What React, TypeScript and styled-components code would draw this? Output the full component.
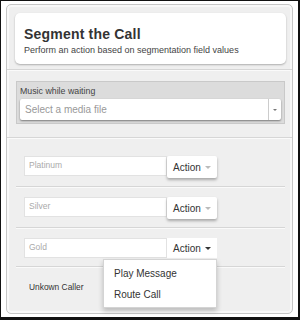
import React from 'react';
import styled, { createGlobalStyle } from 'styled-components';

const GlobalStyle = createGlobalStyle`
  html, body {
    margin: 0;
    padding: 0;
    background: #fff;
  }
  * {
    box-sizing: border-box;
  }
`;

const Frame = styled.div`
  width: 300px;
  height: 320px;
  background: #fff;
  border: solid #111;
  border-width: 1px 2px 3px 1px;
  padding: 3px 5px 3px 5px;
  font-family: 'Liberation Sans', Arial, sans-serif;
  color: #333;
`;

const Panel = styled.div`
  height: 100%;
  display: flex;
  flex-direction: column;
  background: #efefef;
  border: 1px solid #c6c6c6;
  border-radius: 5px;
  box-shadow: inset 0 0 0 2px #f8f8f8;
`;

const Section = styled.div<{ $pad: string; $line?: boolean }>`
  padding: ${(p) => p.$pad};
  border-bottom: ${(p) => (p.$line ? '1px solid #d6d6d6' : 'none')};
  box-shadow: ${(p) => (p.$line ? '0 1px 0 #fafafa' : 'none')};
`;

const HeaderCard = styled.div`
  background: #fff;
  border-radius: 5px;
  height: 51px;
  padding: 14px 9px 0;
  box-shadow: 0 1px 2px rgba(0, 0, 0, 0.28);
`;

const Title = styled.div`
  font-size: 14px;
  font-weight: bold;
  letter-spacing: 0.2px;
  line-height: 14px;
  color: #333;
`;

const Subtitle = styled.div`
  font-size: 9px;
  line-height: 11px;
  margin-top: 4px;
  white-space: nowrap;
  color: #444;
`;

const MusicBox = styled.div`
  background: #dcdcdc;
  border: 1px solid #c9c9c9;
  padding: 4px 3px 3px 3px;
`;

const Label = styled.div`
  font-size: 8.8px;
  line-height: 11px;
  color: #444;
  margin-bottom: 2px;
`;

const Select = styled.div`
  display: flex;
  height: 21px;
  background: #fff;
  border-radius: 2px;
  box-shadow: 0 1px 2px rgba(0, 0, 0, 0.45);
`;

const SelectText = styled.div`
  flex: 1;
  font-size: 10px;
  line-height: 21px;
  padding-left: 5px;
  color: #999;
`;

const SelectToggle = styled.div`
  width: 13px;
  border-left: 1px solid #ccc;
  display: flex;
  align-items: center;
  justify-content: center;
`;

const Caret = styled.span<{ $size: number; $color: string }>`
  width: 0;
  height: 0;
  border-left: ${(p) => p.$size}px solid transparent;
  border-right: ${(p) => p.$size}px solid transparent;
  border-top: ${(p) => p.$size}px solid ${(p) => p.$color};
  display: inline-block;
`;

const Rows = styled.div`
  margin: 0 7px 0 9px;
  padding-top: 8px;
`;

const Row = styled.div<{ $last?: boolean }>`
  display: flex;
  align-items: flex-start;
  padding: ${(p) => (p.$last ? '15px 0 0 13px' : '10px 0 8px 8px')};
  border-bottom: ${(p) => (p.$last ? 'none' : '1px solid #d6d6d6')};
  box-shadow: ${(p) => (p.$last ? 'none' : '0 1px 0 #fafafa')};
`;

const Input = styled.div`
  width: 143px;
  height: 20px;
  background: #fff;
  border: 1px solid #e2e2e2;
  font-size: 8.5px;
  line-height: 16px;
  padding-left: 4px;
  color: #aaa;
`;

const ButtonWrap = styled.div`
  position: relative;
`;

const ActionButton = styled.div<{ $open?: boolean }>`
  width: 50px;
  height: ${(p) => (p.$open ? '20px' : '22px')};
  background: #fff;
  border-radius: ${(p) => (p.$open ? '0' : '2px')};
  box-shadow: ${(p) => (p.$open ? 'none' : '0 2px 3px rgba(0, 0, 0, 0.3)')};
  display: flex;
  align-items: center;
  padding-left: 6px;
  gap: 4px;
  font-size: 10px;
  color: #333;
`;

const Menu = styled.div`
  position: absolute;
  right: 0;
  top: 21px;
  width: 114px;
  background: #fff;
  border: 1px solid #d4d4d4;
  box-shadow: 0 3px 5px rgba(0, 0, 0, 0.22);
  padding: 3px 0 2px;
`;

const MenuItem = styled.div`
  font-size: 10px;
  line-height: 21px;
  padding-left: 10px;
  color: #333;
`;

const Plain = styled.div`
  font-size: 8.4px;
  color: #333;
`;

const tiers = ['Platinum', 'Silver', 'Gold'];

function App() {
  return (
    <Frame>
      <GlobalStyle />
      <Panel>
        <Section $pad="8px 6px 5px 8px" $line>
          <HeaderCard>
            <Title>Segment the Call</Title>
            <Subtitle>Perform an action based on segmentation field values</Subtitle>
          </HeaderCard>
        </Section>
        <Section $pad="11px 7px 13px 9px" $line>
          <MusicBox>
            <Label>Music while waiting</Label>
            <Select>
              <SelectText>Select a media file</SelectText>
              <SelectToggle>
                <Caret $size={2} $color="#777" />
              </SelectToggle>
            </Select>
          </MusicBox>
        </Section>
        <Rows>
          {tiers.map((t) => {
            const open = t === 'Gold';
            return (
              <Row key={t}>
                <Input>{t}</Input>
                <ButtonWrap>
                  <ActionButton $open={open}>
                    Action <Caret $size={3} $color={open ? '#333' : '#bbb'} />
                  </ActionButton>
                  {open && (
                    <Menu>
                      <MenuItem>Play Message</MenuItem>
                      <MenuItem>Route Call</MenuItem>
                    </Menu>
                  )}
                </ButtonWrap>
              </Row>
            );
          })}
          <Row $last>
            <Plain>Unkown Caller</Plain>
          </Row>
        </Rows>
      </Panel>
    </Frame>
  );
}

export default App;
